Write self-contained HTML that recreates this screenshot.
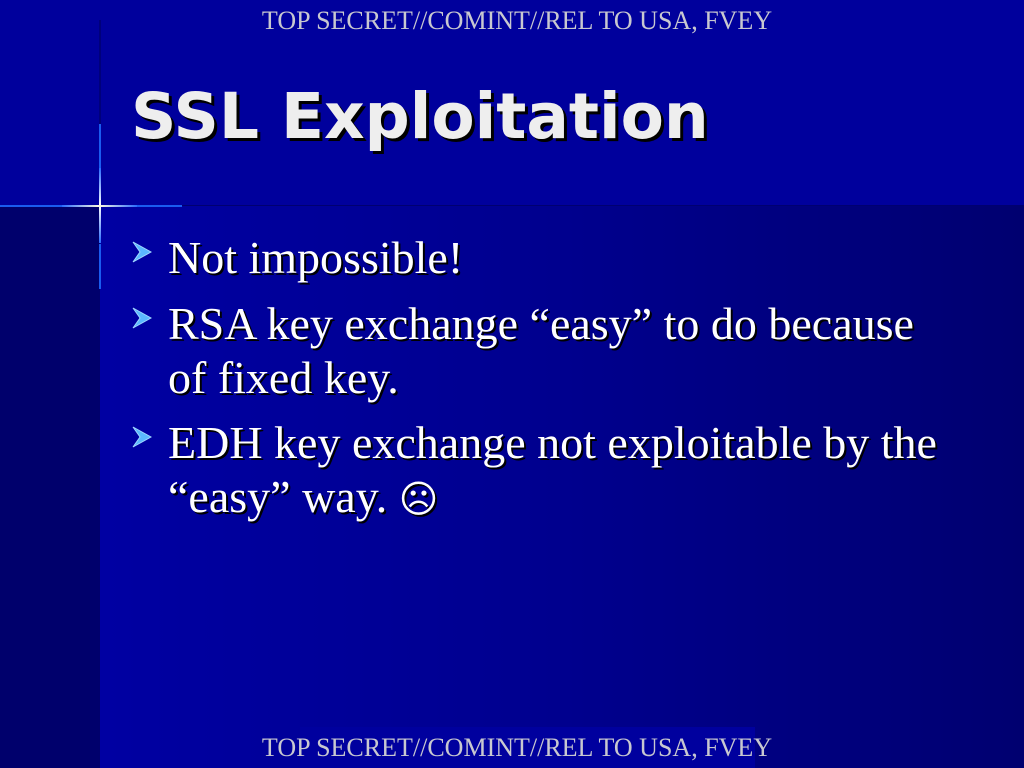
<!DOCTYPE html>
<html><head><style>
html,body{margin:0;padding:0}
body{width:1024px;height:768px;position:relative;overflow:hidden;background:#00006c;font-family:"Liberation Serif",serif}
.top{position:absolute;left:0;top:0;width:1024px;height:206px;background:#00009c}
.main{position:absolute;left:100px;top:206px;width:924px;height:562px;background:linear-gradient(to right,#0000a2 0%,#00008e 50%,#000070 100%)}
.foot{position:absolute;left:300px;top:727px;width:455px;height:41px;background:#00009e}
.cls{position:absolute;left:0;width:1034px;text-align:center;color:#c8c8d0;font-size:26px;white-space:nowrap}
.title{position:absolute;left:131px;top:80px;font-family:"DejaVu Sans",sans-serif;font-weight:bold;font-size:63px;color:#eeeeee;text-shadow:3px 3px 0 #000}
.b{position:absolute;left:168px;font-size:46px;color:#fff;text-shadow:2px 2px 0 #000;line-height:54px;white-space:nowrap}
.arr{position:absolute;left:132px;width:20px;height:22px}
.vl{position:absolute;left:99px;width:2px}
</style></head><body>
<div class="top"></div>
<div class="main"></div>
<div class="foot"></div>
<div class="vl" style="top:20px;height:105px;background:#00007a"></div>
<div class="vl" style="top:124px;height:45px;background:#1a5cf0"></div>
<div class="vl" style="top:168px;height:75px;background:linear-gradient(#2a6cff,#ffffff 50%,#2a6cff)"></div>
<div class="vl" style="top:244px;height:45px;background:#1a5cf0"></div>
<div style="position:absolute;left:0;top:205px;width:62px;height:2px;background:#1a5cf0"></div>
<div style="position:absolute;left:62px;top:205px;width:75px;height:2px;background:linear-gradient(to right,#2a6cff,#fffbe0 50%,#2a6cff)"></div>
<div style="position:absolute;left:137px;top:205px;width:45px;height:2px;background:#1a5cf0"></div>
<div style="position:absolute;left:182px;top:205px;width:842px;height:1px;background:#000070"></div>
<div class="cls" style="top:6px">TOP SECRET//COMINT//REL TO USA, FVEY</div>
<div class="cls" style="top:733px">TOP SECRET//COMINT//REL TO USA, FVEY</div>
<div class="title">SSL Exploitation</div>
<svg class="arr" style="top:241px" viewBox="0 0 20 22"><path d="M1 1 L19 11 L1 21 L8 11 Z" fill="#5ab8ff" stroke="#a0d8ff" stroke-width="1"/></svg>
<svg class="arr" style="top:307px" viewBox="0 0 20 22"><path d="M1 1 L19 11 L1 21 L8 11 Z" fill="#5ab8ff" stroke="#a0d8ff" stroke-width="1"/></svg>
<svg class="arr" style="top:426px" viewBox="0 0 20 22"><path d="M1 1 L19 11 L1 21 L8 11 Z" fill="#5ab8ff" stroke="#a0d8ff" stroke-width="1"/></svg>
<div class="b" style="top:231px">Not impossible!</div>
<div class="b" style="top:297px">RSA key exchange “easy” to do because<br>of fixed key.</div>
<div class="b" style="top:416px">EDH key exchange not exploitable by the<br>“easy” way. <span style="font-family:'DejaVu Sans',sans-serif;font-size:38px">☹</span></div>
</body></html>
